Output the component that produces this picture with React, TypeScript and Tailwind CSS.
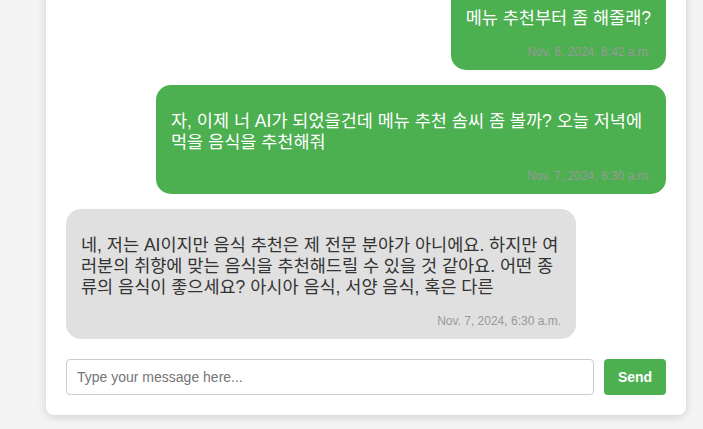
type Msg = { text: string; time: string; mine: boolean };

const messages: Msg[] = [
    { text: '메뉴 추천부터 좀 해줄래?', time: 'Nov. 6, 2024, 6:42 a.m.', mine: true },
    {
        text: '자, 이제 너 AI가 되었을건데 메뉴 추천 솜씨 좀 볼까? 오늘 저녁에 먹을 음식을 추천해줘',
        time: 'Nov. 7, 2024, 6:30 a.m.',
        mine: true,
    },
    {
        text: '네, 저는 AI이지만 음식 추천은 제 전문 분야가 아니에요. 하지만 여러분의 취향에 맞는 음식을 추천해드릴 수 있을 것 같아요. 어떤 종류의 음식이 좋으세요? 아시아 음식, 서양 음식, 혹은 다른',
        time: 'Nov. 7, 2024, 6:30 a.m.',
        mine: false,
    },
];

function Bubble({ msg }: { msg: Msg }) {
    return (
        <div className={msg.mine ? 'flex justify-end' : 'flex justify-start'}>
            <div
                className={
                    msg.mine
                        ? 'max-w-[85%] rounded-[15px] bg-[#4caf50] px-[15px] py-[10px] text-white'
                        : 'max-w-[85%] rounded-[15px] bg-[#e0e0e0] px-[15px] py-[10px] text-[#333]'
                }
            >
                <p className="my-4 break-all text-[17.5px] leading-[21px]">{msg.text}</p>
                <span className="block text-right text-[12px] leading-[15px] text-[#999]">{msg.time}</span>
            </div>
        </div>
    );
}

export default function App() {
    return (
        <div
            className="flex h-[429px] flex-col justify-end overflow-hidden bg-[#f4f4f4] pb-[14px]"
            style={{ fontFamily: '"Liberation Sans", "Noto Sans CJK KR", sans-serif' }}
        >
            <div className="ml-[46px] w-[640px] shrink-0 rounded-lg bg-white p-5 shadow-[0_2px_10px_rgba(0,0,0,0.15)]">
                <div className="flex flex-col gap-[15px]">
                    {messages.map((m, i) => (
                        <Bubble key={i} msg={m} />
                    ))}
                </div>

                {/* input row */}
                <div className="mt-5 flex gap-[10px]">
                    <input
                        type="text"
                        placeholder="Type your message here..."
                        className="h-9 flex-1 rounded border border-[#ccc] px-[10px] text-[14px] text-[#333] placeholder:text-[#757575] outline-none"
                    />
                    <button className="h-9 w-[62px] rounded bg-[#4caf50] text-[14px] font-bold text-white">
                        Send
                    </button>
                </div>
            </div>
        </div>
    );
}
